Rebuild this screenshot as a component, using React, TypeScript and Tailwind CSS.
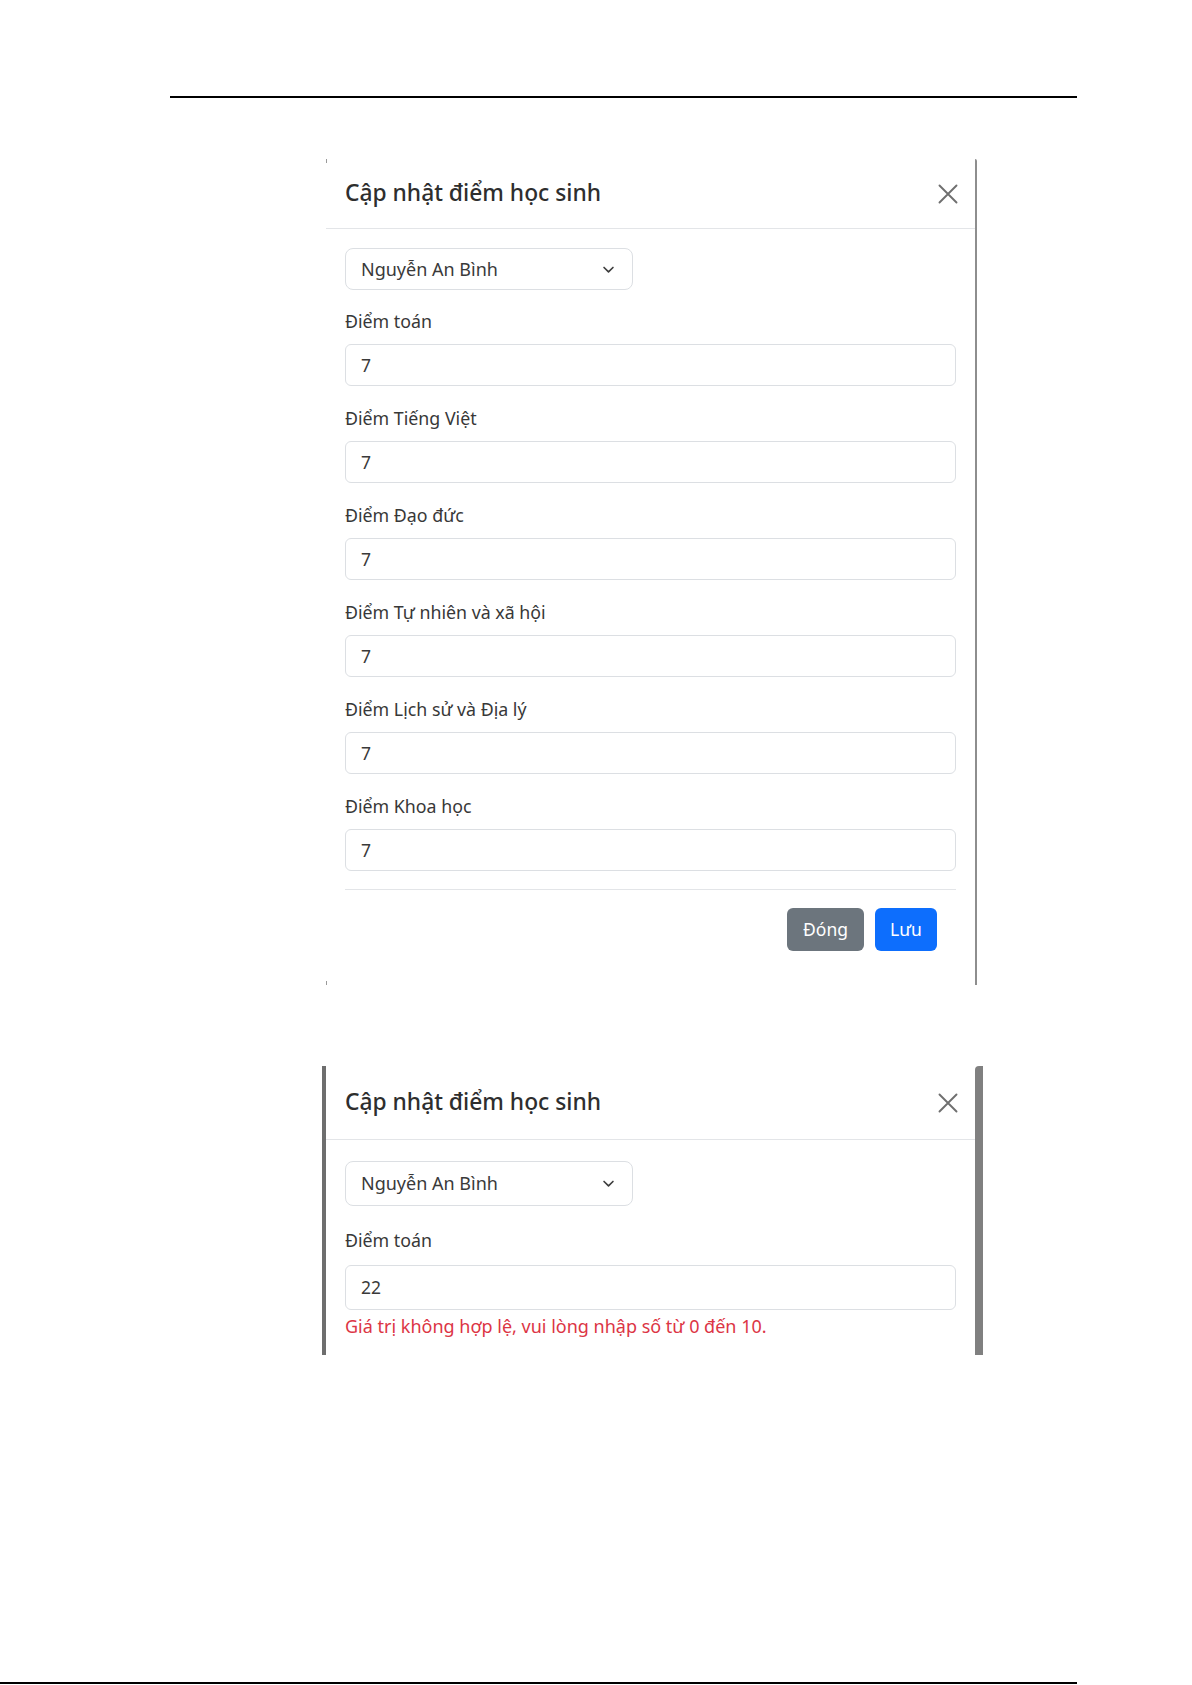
import { ReactNode } from 'react'

const font = { fontFamily: '"Noto Sans", "Open Sans", sans-serif' }

const subjects = [
  'Điểm toán',
  'Điểm Tiếng Việt',
  'Điểm Đạo đức',
  'Điểm Tự nhiên và xã hội',
  'Điểm Lịch sử và Địa lý',
  'Điểm Khoa học',
]

function CloseIcon() {
  return (
    <svg width="20" height="20" viewBox="0 0 20 20" className="shrink-0">
      <path d="M1.5 1.5 18.5 18.5M18.5 1.5 1.5 18.5" stroke="#6f6f6f" strokeWidth="1.9" strokeLinecap="round" />
    </svg>
  )
}

function Chevron() {
  return (
    <svg width="13" height="13" viewBox="0 0 16 16">
      <path d="M2.5 5.5 8 11l5.5-5.5" fill="none" stroke="#3d3d3d" strokeWidth="2" strokeLinecap="round" strokeLinejoin="round" />
    </svg>
  )
}

function Header({ h }: { h: string }) {
  return (
    <div className={`flex items-center justify-between border-b border-[#e3e5e8] pl-[19px] pr-[17px] ${h}`}>
      <h5 className="text-[22.8px] font-medium text-[#2e2e2e]">Cập nhật điểm học sinh</h5>
      <CloseIcon />
    </div>
  )
}

function StudentSelect({ h }: { h: string }) {
  return (
    <div className={`flex w-[288px] items-center justify-between rounded-lg border border-[#dcdfe3] pl-[15px] pr-[17px] text-[18px] text-[#3a3a3a] ${h}`}>
      <span>Nguyễn An Bình</span>
      <Chevron />
    </div>
  )
}

function Field({ value, h }: { value: string; h: string }) {
  return (
    <div className={`flex items-center rounded-md border border-[#dcdfe3] pl-[15px] text-[17.5px] text-[#3a3a3a] ${h}`}>
      {value}
    </div>
  )
}

function Label({ children }: { children: ReactNode }) {
  return <div className="flex h-[26px] items-center text-[17.8px] text-[#383838]">{children}</div>
}

export default function App() {
  return (
    <div className="flex min-h-[1685px] w-[1192px] flex-col bg-white" style={font}>
      <div className="pl-[170px] pt-[96px]">
        <div className="h-[2px] w-[907px] bg-black" />
      </div>

      {/* first capture: full form */}
      <div className="ml-[326px] mt-[61px] flex w-[651px]">
        <div className="relative flex-1 bg-white">
          <span className="absolute left-0 top-0 h-[4px] w-px bg-[#9a9a9a]" />
          <span className="absolute bottom-0 left-0 h-[4px] w-px bg-[#9a9a9a]" />
          <Header h="h-[70px]" />
          <div className="px-[19px] pt-[19px]">
            <StudentSelect h="h-[42px]" />
            {subjects.map((s, i) => (
              <div key={s} className={i === 0 ? 'mt-[18px]' : 'mt-[19px]'}>
                <Label>{s}</Label>
                <div className="mt-[10px]">
                  <Field value="7" h="h-[42px]" />
                </div>
              </div>
            ))}
            <div className="mt-[18px] flex justify-end gap-[11px] border-t border-[#e3e5e8] pb-[34px] pr-[19px] pt-[18px]">
              <button className="h-[43px] w-[77px] rounded-md bg-[#6c757d] text-[17.5px] text-white">Đóng</button>
              <button className="h-[43px] w-[62px] rounded-md bg-[#0d6efd] text-[17.5px] text-white">Lưu</button>
            </div>
          </div>
        </div>
        <div className="w-[2px] rounded-tr bg-[#8e8e8e]" />
      </div>

      {/* second capture: validation error */}
      <div className="ml-[322px] mt-[81px] flex h-[289px] w-[661px] overflow-hidden">
        <div className="w-[4px] bg-[#6e6e6e]" />
        <div className="flex-1 bg-white">
          <Header h="h-[74px]" />
          <div className="px-[19px] pt-[21px]">
            <StudentSelect h="h-[45px]" />
            <div className="mt-[21px]">
              <Label>Điểm toán</Label>
              <div className="mt-[12px]">
                <Field value="22" h="h-[45px]" />
              </div>
              <div className="mt-[4px] text-[18px] leading-[24px] text-[#dc3545]">
                Giá trị không hợp lệ, vui lòng nhập số từ 0 đến 10.
              </div>
            </div>
          </div>
        </div>
        <div className="w-[8px] rounded-tl bg-[#808080]" />
      </div>

      <div className="mt-auto pb-px">
        <div className="h-[2px] w-[1077px] bg-black" />
      </div>
    </div>
  )
}
